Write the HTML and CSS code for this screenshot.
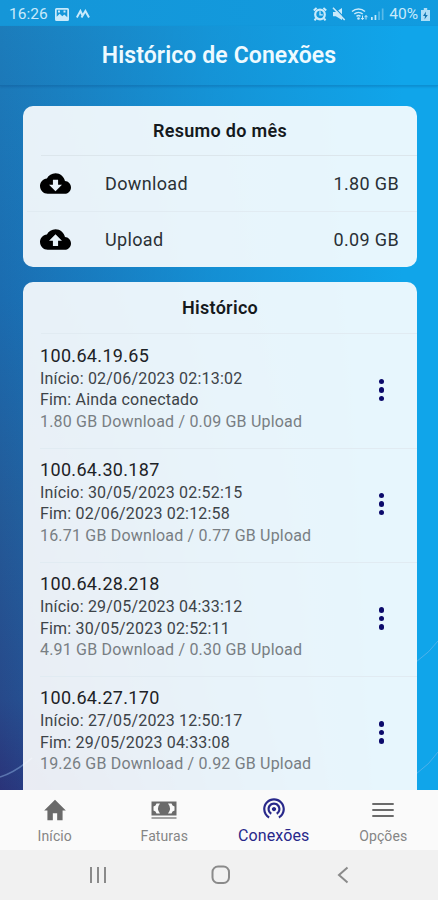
FILE: index.html
```
<!DOCTYPE html>
<html lang="pt-BR">
  <head>
    <meta charset="UTF-8" />
    <meta name="viewport" content="width=device-width, initial-scale=1" />
    <title>Histórico de Conexões</title>
    <link rel="stylesheet" href="styles.css">
  </head>
  <body>
    <div class="screen">
      <svg class="backdrop-lines" viewBox="0 0 438 790">
        <path d="M0 777 Q14 773 32 758" stroke-width="1.6" />
        <path d="M416 662 Q430 652 438 641" />
        <path d="M416 774 Q430 764 438 752" />
      </svg>

      <div class="status-bar">
        <div class="status-left">
          <span class="clock">16:26</span>
          <svg width="14" height="13" viewBox="0 0 14 13">
            <path fill="currentColor" fill-rule="evenodd" d="M1.5 0h11A1.5 1.5 0 0 1 14 1.5v10a1.5 1.5 0 0 1-1.5 1.5h-11A1.5 1.5 0 0 1 0 11.500v-10A1.500 1.500 0 0 1 1.500 0zM1.700 1.700v7l3-3 2.600 2.500 2-1.600 3 2.700V1.700zM3 2.500h2v2H3zM8.500 2.500h2v2h-2z" />
          </svg>
          <svg width="14" height="10" viewBox="0 0 14 10">
            <path fill="none" stroke="currentColor" stroke-width="2" d="M.8 8.500 4.400 2l2.100 4.500M5.500 8.500 9.400 2 13 8.500" />
          </svg>
        </div>
        <div class="status-right">
          <svg width="14" height="14" viewBox="0 0 14 14">
            <path fill="none" stroke="currentColor" stroke-width="2" d="M.8 3.500 3.600 1M13.200 3.500 10.400 1M3 11.500 1.500 13.300M11 11.500l1.500 1.800" />
            <circle cx="7" cy="7.500" r="4.800" fill="none" stroke="currentColor" stroke-width="2.200" />
            <path fill="none" stroke="currentColor" stroke-width="1.300" d="M7 4.300v3.500h2.800" />
          </svg>
          <svg width="14" height="14" viewBox="0 0 14 14">
            <path fill="currentColor" d="M1 5h2.800L10 1v12L3.800 9.300H1z" />
            <path stroke="#1292d4" stroke-width="1.200" d="M2.300.3 13.500 12" />
            <path stroke="currentColor" stroke-width="1.600" d="M1 .8 12.700 13" />
          </svg>
          <svg class="wifi" width="18" height="14" viewBox="0 0 18 14">
            <g fill="none" stroke="currentColor" stroke-width="1.500">
              <path d="M1 4.500a10 10 0 0 1 13 0M3.300 7a6.500 6.500 0 0 1 8.400 0M5.500 9.300a3.300 3.300 0 0 1 4 0" />
              <path d="M11.500 8.500v4M15 8.500v4M10 11l1.500 1.700L13 11M13.500 10.200 15 8.500l1.500 1.700" stroke-width="1" />
            </g>
            <circle cx="7.500" cy="11.500" r="1.300" fill="currentColor" />
          </svg>
          <svg class="signal" width="13" height="12" viewBox="0 0 13 12">
            <path fill="currentColor" d="M0 9h1.700v3H0zM3.600 7h1.700v5H3.600z" />
            <path fill="currentColor" opacity=".4" d="M7.200 3.500h1.700V12H7.200zM10.800.5h1.700V12h-1.700z" />
          </svg>
          <span class="battery-level">40%</span>
          <svg class="battery" width="9" height="13" viewBox="0 0 9 13">
            <path fill="currentColor" opacity=".85" d="M2.800 0h3.400v2H9v11H0V2h2.800z" />
            <path fill="#1275b0" d="M5 3.500 2 8h2l-.5 3.500L6.800 7H4.700z" />
          </svg>
        </div>
      </div>

      <header class="title-bar">
        <h1>Histórico de Conexões</h1>
      </header>

      <main class="content">
        <section class="card summary">
          <h2>Resumo do mês</h2>
          <div class="summary-row">
            <svg class="cloud" viewBox="0 4 24 16">
              <path d="M19.350 10.040C18.670 6.590 15.640 4 12 4 9.110 4 6.600 5.640 5.350 8.040 2.340 8.360 0 10.910 0 14c0 3.310 2.690 6 6 6h13c2.760 0 5-2.240 5-5 0-2.640-2.050-4.780-4.650-4.960zM17 13l-5 5-5-5h3V9h4v4h3z" />
            </svg>
            <span class="summary-label">Download</span>
            <span class="summary-value">1.80 GB</span>
          </div>
          <div class="summary-row">
            <svg class="cloud" viewBox="0 4 24 16">
              <path d="M19.350 10.040C18.670 6.590 15.640 4 12 4 9.110 4 6.600 5.640 5.350 8.040 2.340 8.360 0 10.910 0 14c0 3.310 2.690 6 6 6h13c2.760 0 5-2.240 5-5 0-2.640-2.050-4.780-4.650-4.960zM14 13v4h-4v-4H7l5-5 5 5h-3z" />
            </svg>
            <span class="summary-label">Upload</span>
            <span class="summary-value">0.09 GB</span>
          </div>
        </section>

        <section class="card history">
          <h2>Histórico</h2>
          <div class="session">
            <div class="session-info">
              <div class="ip">100.64.19.65</div>
              <div class="date">Início: 02/06/2023 02:13:02</div>
              <div class="date">Fim: Ainda conectado</div>
              <div class="usage">1.80 GB Download / 0.09 GB Upload</div>
            </div>
            <div class="more"><i></i><i></i><i></i></div>
          </div>
          <div class="session">
            <div class="session-info">
              <div class="ip">100.64.30.187</div>
              <div class="date">Início: 30/05/2023 02:52:15</div>
              <div class="date">Fim: 02/06/2023 02:12:58</div>
              <div class="usage">16.71 GB Download / 0.77 GB Upload</div>
            </div>
            <div class="more"><i></i><i></i><i></i></div>
          </div>
          <div class="session">
            <div class="session-info">
              <div class="ip">100.64.28.218</div>
              <div class="date">Início: 29/05/2023 04:33:12</div>
              <div class="date">Fim: 30/05/2023 02:52:11</div>
              <div class="usage">4.91 GB Download / 0.30 GB Upload</div>
            </div>
            <div class="more"><i></i><i></i><i></i></div>
          </div>
          <div class="session">
            <div class="session-info">
              <div class="ip">100.64.27.170</div>
              <div class="date">Início: 27/05/2023 12:50:17</div>
              <div class="date">Fim: 29/05/2023 04:33:08</div>
              <div class="usage">19.26 GB Download / 0.92 GB Upload</div>
            </div>
            <div class="more"><i></i><i></i><i></i></div>
          </div>
        </section>
      </main>

      <nav class="tabs">
        <div class="tab">
          <svg width="26" height="26" viewBox="0 0 24 24">
            <path fill="currentColor" d="M10 21.500v-6.500h4v6.500h5V12.500h3L12 2.500 2 12.500h3v9z" />
          </svg>
          <span>Início</span>
        </div>
        <div class="tab">
          <svg width="26" height="26" viewBox="0 0 26 26">
            <path fill="currentColor" fill-rule="evenodd" d="M.5 4.500h25v14H.5zM5.500 6.500a4 4 0 0 1-3 3v4a4 4 0 0 1 3 3h3.500a8 8 0 0 1 0-10zM20.500 6.500H17a8 8 0 0 1 0 10h3.500a4 4 0 0 1 3-3v-4a4 4 0 0 1-3-3z" />
            <path fill="currentColor" opacity=".6" d="M.5 20h25v2H.5z" />
          </svg>
          <span>Faturas</span>
        </div>
        <div class="tab active">
          <svg width="26" height="26" viewBox="0 0 24 24">
            <path fill="currentColor" d="M12 11c-1.100 0-2 .9-2 2s.9 2 2 2 2-.9 2-2-.9-2-2-2zm6 2c0-3.310-2.690-6-6-6s-6 2.690-6 6c0 2.220 1.210 4.150 3 5.190l1-1.740c-1.190-.7-2-1.970-2-3.450 0-2.210 1.790-4 4-4s4 1.790 4 4c0 1.480-.81 2.750-2 3.450l1 1.740c1.790-1.040 3-2.970 3-5.190zM12 3C6.480 3 2 7.480 2 13c0 3.700 2.010 6.920 4.990 8.650l1-1.730C5.610 18.530 4 15.960 4 13c0-4.420 3.580-8 8-8s8 3.580 8 8c0 2.960-1.610 5.530-4 6.920l1 1.730c2.990-1.730 5-4.950 5-8.650 0-5.520-4.480-10-10-10z" />
          </svg>
          <span>Conexões</span>
        </div>
        <div class="tab">
          <svg width="26" height="26" viewBox="0 0 26 26">
            <path fill="currentColor" d="M2.300 6h21.400v2H2.300zM2.300 12h21.400v2H2.300zM2.300 18h21.400v2H2.300z" />
          </svg>
          <span>Opções</span>
        </div>
      </nav>

      <div class="system-nav">
        <svg width="18" height="18" viewBox="0 0 18 18">
          <path d="M2 1v16M9 1v16M16 1v16" />
        </svg>
        <svg width="20" height="20" viewBox="0 0 20 20">
          <rect x="1.500" y="1.500" width="16.500" height="16.500" rx="5.500" />
        </svg>
        <svg width="18" height="18" viewBox="0 0 18 18">
          <path d="M13.500 1.500 5 9l8.500 7.500" />
        </svg>
      </div>
    </div>
  </body>
</html>
```
FILE: styles.css
```
* {
  box-sizing: border-box;
}

body {
  margin: 0;
  font-family: Roboto, "Liberation Sans", sans-serif;
}

svg {
  display: block;
  flex: none;
}

.screen {
  position: relative;
  display: flex;
  flex-direction: column;
  width: 438px;
  height: 900px;
  overflow: hidden;
  background:
    linear-gradient(90deg, rgba(16, 165, 234, 0) 0%, rgba(16, 165, 234, 0.6) 48%, #10a5ea 92%),
    linear-gradient(180deg, #1c7ebc 0, #1c78b8 90px, #1b6cb0 300px, #235a98 510px, #27498a 700px, #2a3379 790px);
}

.backdrop-lines {
  position: absolute;
  top: 0;
  left: 0;
  width: 438px;
  height: 790px;
  fill: none;
  stroke: rgba(150, 190, 235, 0.45);
}

.status-bar {
  display: flex;
  justify-content: space-between;
  height: 26px;
  padding: 2px 8px 0 9px;
  background: linear-gradient(90deg, #1596d8, #119bdf);
  color: #c9eafb;
  font-size: 15.500px;
}

.status-left,
.status-right {
  display: flex;
  align-items: center;
}

.status-left {
  gap: 7px;
}

.status-right {
  gap: 5px;
}

.signal {
  margin-left: -3px;
}

.battery {
  margin-left: -2px;
}

.title-bar {
  position: relative;
  display: flex;
  align-items: center;
  justify-content: center;
  height: 60px;
  border-bottom: 1px solid rgba(0, 60, 120, 0.2);
  box-shadow: 0 1px 2px rgba(0, 50, 110, 0.2);
}

.title-bar h1 {
  margin: 0;
  color: #eefaff;
  font-size: 23px;
  font-weight: 600;
  letter-spacing: 0.1px;
}

.content {
  position: relative;
  flex: 1;
  min-height: 0;
  padding: 20px 21px 0 23px;
  overflow: hidden;
}

.card {
  overflow: hidden;
  border-radius: 10px;
  background: rgba(255, 255, 255, 0.9);
}

.card h2 {
  margin: 0 0 0 18px;
  padding-right: 18px;
  border-bottom: 1px solid #dce6ec;
  color: #15191d;
  font-size: 18px;
  font-weight: 600;
  letter-spacing: 0.3px;
  line-height: 49px;
  text-align: center;
}

.summary {
  height: 161px;
  margin-bottom: 15px;
}

.summary-row {
  display: flex;
  align-items: center;
  height: 55px;
  margin-left: 4px;
  padding: 0 18px 0 13px;
  color: #2a3035;
  font-size: 18px;
  letter-spacing: 0.35px;
}

.summary-row + .summary-row {
  border-top: 1px solid #e1ebf2;
}

.cloud {
  width: 31px;
  height: 21px;
  margin-right: 34px;
}

.summary-value {
  margin-left: auto;
}

.history {
  height: 560px;
}

.history h2 {
  border-color: #e1ebf2;
  line-height: 51px;
}

.session {
  display: flex;
  align-items: center;
  justify-content: space-between;
  height: 114.300px;
  margin-left: 17px;
  padding: 0 33px 6px 0;
}

.session:nth-of-type(n + 2) {
  border-top: 1px solid #e1ebf2;
}

.session:first-of-type {
  height: 113.500px;
}

.session-info {
  color: #3d4348;
  font-size: 16px;
  letter-spacing: 0.19px;
  line-height: 21.500px;
}

.ip {
  color: #1d2226;
  font-size: 18px;
  letter-spacing: 0.33px;
  line-height: 25px;
}

.usage {
  color: #787e83;
  line-height: 22.500px;
}

.more {
  display: grid;
  gap: 3px;
  padding-top: 4px;
}

.more i {
  width: 5.500px;
  height: 5.500px;
  border-radius: 50%;
  background: #0c0a6b;
}

.tabs {
  position: relative;
  display: grid;
  grid-template-columns: repeat(4, 1fr);
  height: 60px;
  background: #fafafa;
}

.tab {
  display: flex;
  flex-direction: column;
  align-items: center;
  padding-top: 7px;
  color: #6a6a6a;
  font-size: 14px;
  line-height: 26px;
}

.tab span {
  color: #858585;
  letter-spacing: 0.1px;
}

.tab.active,
.tab.active span {
  color: #28288a;
}

.tab.active {
  padding-top: 5px;
  font-size: 16px;
  line-height: 29px;
}

.system-nav {
  display: flex;
  align-items: center;
  justify-content: space-between;
  height: 50px;
  padding: 0 86px 0 89px;
  background: #f1f1f1;
  fill: none;
  stroke: #8a8a8a;
  stroke-width: 2;
}
```
